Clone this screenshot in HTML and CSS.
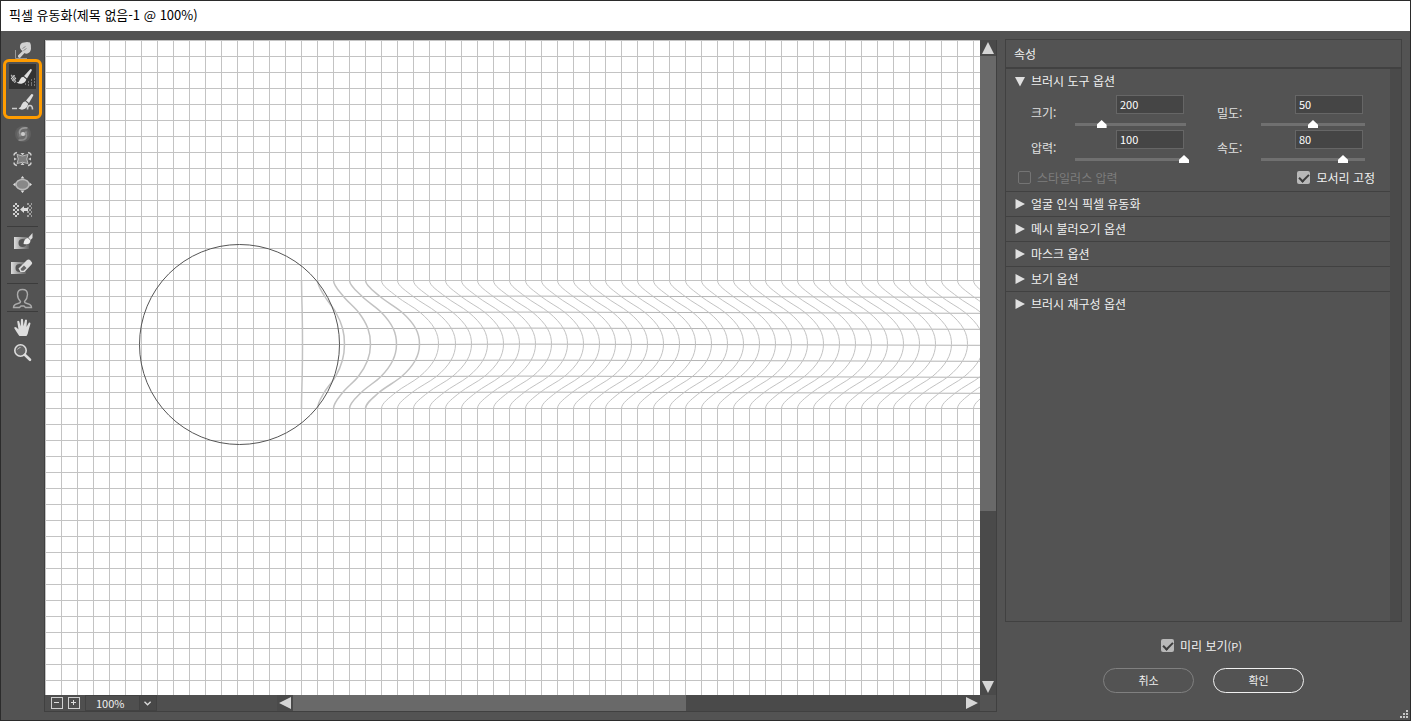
FILE: index.html
```html
<!DOCTYPE html>
<html lang="ko">
<head>
    <meta charset="UTF-8">
    <meta name="viewport" content="width=device-width, initial-scale=1.0">
    <title>픽셀 유동화</title>
    <link rel="stylesheet" href="styles.css">
</head>
<body>
    <div class="dialog">
        <header class="titlebar">픽셀 유동화(제목 없음-1 @ 100%)</header>
        <div class="main">
            <nav class="toolbar">
                <button class="tool" aria-label="뒤틀기">
                    <svg viewBox="0 0 27 25">
                        <path d="M6.500 11V19.500H18" fill="none" stroke="#999"/>
                        <path d="M11 7Q11.500 3.500 15 3.500Q18 2.500 21 3.500Q22.500 6 22 10Q21.500 13.500 18.500 14.500Q16.500 15 15.500 14L11 19Q8.500 18.500 9 16.500L13.500 12Q10.500 10 11 7Z" fill="#d0d0d0"/>
                        <path d="M13.500 9.500l3-2M14.500 11.500l3-2" stroke="#8a8a8a"/>
                    </svg>
                </button>
                <div class="brush-tools">
                    <button class="tool active" aria-label="재구성">
                        <svg viewBox="0 0 27 25">
                            <path d="M2 10l5 4v5l-5-4z" fill="#666"/>
                            <path d="M2 11l5 7M2 14l4 5M4 11l3 4M2 15l4-4M3 17l4-3" stroke="#ddd" stroke-width=".7"/>
                            <path d="M21.500 5Q23.500 5 22.500 7L18 14.500L15 12Z" fill="#ddd"/>
                            <path d="M14.300 12.700L17.300 15.300Q16.500 19 12.500 19.700Q10 20 7.500 18.500Q10.500 18 11 15.500Q12 13 14.300 12.700Z" fill="#e4e4e4"/>
                            <path d="M16 20h1M19 18h1M22 16h1M25 15h1M19 21h1M22 19h1M25 18h1M22 21h1M25 21h1" stroke="#bbb"/>
                        </svg>
                    </button>
                    <button class="tool" aria-label="매끄럽게">
                        <svg viewBox="0 0 27 25">
                            <path d="M22.500 4Q25 4 24 6L20 13L17 10.500Z" fill="#ddd"/>
                            <path d="M16.300 11.200L19.200 13.700Q18.500 18.500 14 19.500Q12 20 9.500 18.500Q12 17.500 12.700 14.500Q14 11.500 16.300 11.200Z" fill="#ddd"/>
                            <path d="M3 18.500H8M18.500 19.500Q18.500 15.500 21 15.500Q23.500 15.500 23.500 19.500" fill="none" stroke="#ccc" stroke-width="1.600"/>
                        </svg>
                    </button>
                </div>
                <button class="tool" aria-label="시계 방향 돌리기">
                    <svg viewBox="0 0 27 25">
                        <circle cx="14" cy="12" r="8" fill="#606060"/>
                        <circle cx="14" cy="12" r="6" fill="#6c6c6c"/>
                        <path d="M18.500 6Q11 5 10.500 10Q10.500 13 14 13Q17 13 17 9.500" fill="none" stroke="#999" stroke-width="1.600"/>
                        <path d="M9.500 18Q17 19 17.500 14Q17.500 11 14 11Q11 11 11 14.500" fill="none" stroke="#8c8c8c" stroke-width="1.600"/>
                        <circle cx="14" cy="12" r="2" fill="#ccc"/>
                    </svg>
                </button>
                <button class="tool" aria-label="오목">
                    <svg viewBox="0 0 27 25">
                        <path d="M8 7.500Q13.500 10.500 19 7.500Q16.500 12 19 16.500Q13.500 14 8 16.500Q10.500 12 8 7.500Z" fill="#808080" stroke="#bbb"/>
                        <path d="M5 8.500Q5 6 8 5.500M19 5.500Q22 6 22 8.500M5 15.500Q5 18 8 18.500M19 18.500Q22 18 22 15.500" fill="none" stroke="#ccc" stroke-width="1.500"/>
                        <path d="M13.500 8.500l-2-2.500h4zM13.500 15.500l-2 2.500h4zM8 12l-3-1.500v3zM19 12l3-1.500v3z" fill="#ccc"/>
                    </svg>
                </button>
                <button class="tool" aria-label="볼록">
                    <svg viewBox="0 0 27 25">
                        <ellipse cx="13.500" cy="12.500" rx="6.500" ry="5" fill="#888" stroke="#bbb" stroke-width="1.500"/>
                        <path d="M13.500 4l2 2.500h-4zM13.500 21l2-2.500h-4zM4 12.500l2.500-2v4zM23 12.500l-2.500-2v4z" fill="#ddd"/>
                    </svg>
                </button>
                <button class="tool" aria-label="왼쪽 밀기">
                    <svg viewBox="0 0 27 25">
                        <defs>
                            <pattern id="checker" width="4" height="4" patternUnits="userSpaceOnUse">
                                <path d="M0 0h2v2h-2zM2 2h2v2h-2z" fill="#d0d0d0"/>
                            </pattern>
                        </defs>
                        <path d="M4 6h6v14H4z" fill="url(#checker)"/>
                        <path d="M18 6h5v14h-5z" fill="url(#checker)" opacity=".6"/>
                        <path d="M11 12.500l4-3.500v2h4v3h-4v2z" fill="#ddd"/>
                    </svg>
                </button>
                <hr class="divider">
                <button class="tool" aria-label="마스크 고정">
                    <svg viewBox="0 0 27 25">
                        <defs>
                            <linearGradient id="fade">
                                <stop offset="0" stop-color="#ddd"/>
                                <stop offset="1" stop-color="#606060"/>
                            </linearGradient>
                        </defs>
                        <path d="M5 8h15v12H5z" fill="url(#fade)"/>
                        <circle cx="13.500" cy="14" r="4" fill="#555"/>
                        <path d="M14.500 15Q15 9.500 19 9L21.500 11.500Q21 16.500 14.500 15Z" fill="#eee"/>
                        <path d="M19.500 8.500L23.500 4V9L21.500 11Z" fill="#ddd"/>
                    </svg>
                </button>
                <button class="tool" aria-label="마스크 고정 해제">
                    <svg viewBox="0 0 27 25">
                        <path d="M2 8h15v12H2z" fill="url(#fade)"/>
                        <circle cx="10.500" cy="14" r="4" fill="#555"/>
                        <path d="M9.500 14.500L18 6Q20 5 21.500 6.500L23 8.500Q23.500 9.500 22.500 10.500L15.500 18H11.500Z" fill="#ddd"/>
                        <path d="M11.500 15l3.500-3.500 2.500 2.500-3 2.800h-2z" fill="#666"/>
                    </svg>
                </button>
                <hr class="divider">
                <button class="tool" aria-label="얼굴">
                    <svg viewBox="0 0 27 25">
                        <path d="M11.500 15.500Q8.500 12.500 8.500 8.500Q8.500 3.500 13.500 3.500Q18.500 3.500 18.500 8.500Q18.500 12.500 15.500 15.500Q15.500 17 18 17.500Q22.500 18.500 22.500 21.500H16.500L15 20H12L10.500 21.500H4.500Q4.500 18.500 9 17.500Q11.500 17 11.500 15.500Z" fill="none" stroke="#aaa" stroke-width="1.400"/>
                    </svg>
                </button>
                <hr class="divider tight">
                <button class="tool" aria-label="손">
                    <svg viewBox="0 0 27 25">
                        <path d="M10 20.500Q7.500 17 5.200 13Q5.500 11.300 7.500 12.500L9.500 14.500L8.200 6.500Q9 5 10.200 6.300L11.700 11.500L11.900 4.500Q13 3.200 14 4.500L14.500 11.200L16 5Q17.200 4 18 5.200L17.500 12L19.800 7.700Q21.200 7 21.500 8.500L19.500 15.500Q19 19 17.500 21H10.500Z" fill="#ddd"/>
                    </svg>
                </button>
                <button class="tool" aria-label="확대/축소">
                    <svg viewBox="0 0 27 25">
                        <circle cx="11.500" cy="10.500" r="5.700" fill="#666" stroke="#ddd" stroke-width="1.600"/>
                        <path d="M8.500 9.500Q9.500 7.500 11.500 7.500" fill="none" stroke="#bbb"/>
                        <path d="M15.800 14.800L21 19.800" stroke="#ddd" stroke-width="2.600" stroke-linecap="round"/>
                    </svg>
                </button>
            </nav>

            <section class="workspace">
                <div class="canvas">
                    <svg class="artwork" width="100%" height="100%">
                        <defs>
                            <pattern id="grid" width="16" height="16" patternUnits="userSpaceOnUse">
                                <path d="M0 .5H16M.5 0V16" stroke="#c3c3c3"/>
                            </pattern>
                        </defs>
                        <rect width="100%" height="100%" fill="url(#grid)"/>
                        <rect x="256" y="241" width="100%" height="127" fill="#fff"/>
                        <g id="rows" class="rows"></g>
                        <g id="waves" class="waves"></g>
                        <circle class="brush" cx="194.500" cy="304.500" r="100"/>
                    </svg>
                </div>
                <div class="vscroll">
                    <button class="arrow" aria-label="위로"><svg viewBox="0 0 16 16"><path d="M8 2l6 12H2z"/></svg></button>
                    <div class="track"><div class="thumb"></div></div>
                    <button class="arrow" aria-label="아래로"><svg viewBox="0 0 16 16"><path d="M8 14L2 2h12z"/></svg></button>
                </div>
                <div class="statusbar">
                    <div class="zoom-tools">
                        <button class="step" aria-label="축소"><svg viewBox="0 0 12 12"><path d="M3 5.500h5"/></svg></button>
                        <button class="step" aria-label="확대"><svg viewBox="0 0 12 12"><path d="M3 5.500h5M5.500 3v5"/></svg></button>
                        <div class="zoom-level">
                            <select aria-label="배율">
                                <option>50%</option>
                                <option selected>100%</option>
                                <option>200%</option>
                            </select>
                            <svg viewBox="0 0 18 16"><path d="M5 6.500L8.500 10L12 6.500"/></svg>
                        </div>
                    </div>
                    <div class="hscroll">
                        <button class="arrow" aria-label="왼쪽으로"><svg viewBox="0 0 16 16"><path d="M2 8l12-6v12z"/></svg></button>
                        <div class="track"><div class="thumb"></div></div>
                        <button class="arrow" aria-label="오른쪽으로"><svg viewBox="0 0 16 16"><path d="M14 8L2 2v12z"/></svg></button>
                    </div>
                </div>
                <div class="corner"></div>
            </section>

            <aside class="side">
                <div class="panel">
                    <h1 class="panel-title">속성</h1>
                    <div class="panel-body">
                        <div class="sections">
                            <button class="section open">브러시 도구 옵션</button>
                            <div class="options">
                                <div class="option">
                                    <label for="size">크기:</label>
                                    <div class="control">
                                        <input type="text" id="size" value="200">
                                        <input type="range" aria-label="크기" value="23">
                                    </div>
                                </div>
                                <div class="option">
                                    <label for="density">밀도:</label>
                                    <div class="control">
                                        <input type="text" id="density" value="50">
                                        <input type="range" aria-label="밀도" value="50">
                                    </div>
                                </div>
                                <div class="option">
                                    <label for="pressure">압력:</label>
                                    <div class="control">
                                        <input type="text" id="pressure" value="100">
                                        <input type="range" aria-label="압력" value="100">
                                    </div>
                                </div>
                                <div class="option">
                                    <label for="rate">속도:</label>
                                    <div class="control">
                                        <input type="text" id="rate" value="80">
                                        <input type="range" aria-label="속도" value="80">
                                    </div>
                                </div>
                            </div>
                            <div class="checks">
                                <label class="check disabled"><input type="checkbox" disabled>스타일러스 압력</label>
                                <label class="check"><input type="checkbox" checked>모서리 고정</label>
                            </div>
                            <button class="section">얼굴 인식 픽셀 유동화</button>
                            <button class="section">메시 불러오기 옵션</button>
                            <button class="section">마스크 옵션</button>
                            <button class="section">보기 옵션</button>
                            <button class="section">브러시 재구성 옵션</button>
                        </div>
                        <div class="panel-scroll"></div>
                    </div>
                </div>
                <footer class="footer">
                    <label class="check"><input type="checkbox" checked><span>미리 보기<small>(P)</small></span></label>
                    <div class="buttons">
                        <button class="btn">취소</button>
                        <button class="btn primary">확인</button>
                    </div>
                </footer>
            </aside>
        </div>
        <svg class="grip" viewBox="0 0 9 9"><path d="M6 0h2v2H6zM3 3h2v2H3zM6 3h2v2H6zM0 6h2v2H0zM3 6h2v2H3zM6 6h2v2H6z"/></svg>
    </div>
    <script src="script.js"></script>
</body>
</html>
```
FILE: styles.css
```css
* {
    box-sizing: border-box;
}
body {
    margin: 0;
    background: #535353;
    color: #f0f0f0;
    font-family: "Noto Sans CJK KR", sans-serif;
    font-size: 12px;
}
button, input, select {
    margin: 0;
    padding: 0;
    border: 0;
    background: none;
    color: inherit;
    font-family: inherit;
    font-size: inherit;
}
svg {
    display: block;
}
.dialog {
    position: relative;
    display: flex;
    flex-direction: column;
    height: 100vh;
    min-height: 480px;
    border: 1px solid #2b2b2b;
}
.titlebar {
    height: 30px;
    padding-left: 8px;
    background: #fff;
    color: #000;
    font-size: 13px;
    line-height: 28px;
}
.main {
    display: flex;
    flex: 1;
    min-height: 0;
}

/* toolbar */
.toolbar {
    display: flex;
    flex-direction: column;
    align-items: center;
    width: 43px;
    padding-top: 8px;
}
.tool {
    width: 27px;
    height: 25px;
}
.tool svg {
    width: 27px;
    height: 25px;
}
.tool.active {
    background: #333;
}
.brush-tools {
    position: relative;
    display: flex;
    flex-direction: column;
    gap: 1px;
    margin-bottom: 7px;
}
.brush-tools::after {
    content: "";
    position: absolute;
    inset: -5px -6px -4px;
    border: 3px solid #ff9c00;
    border-radius: 6px;
    pointer-events: none;
}
.divider {
    width: 31px;
    height: 1px;
    margin: 4px 0 2px;
    border: 0;
    background: #3c3c3c;
}
.divider.tight {
    margin: 0 0 3px;
}

/* canvas and scrollbars */
.workspace {
    display: grid;
    grid-template-columns: minmax(0, 1fr) 16px;
    grid-template-rows: minmax(0, 1fr) 16px;
    flex: 1;
    margin: 9px 0 8px;
    border: 1px solid #404040;
    border-top: 0;
}
.canvas {
    background: #fff;
    overflow: hidden;
}
.rows, .waves {
    fill: none;
    stroke: #b4b4b4;
}
.waves {
    stroke: #c2c2c2;
}
.waves .bold {
    stroke-width: 1.5;
}
.brush {
    fill: none;
    stroke: #555;
}
.vscroll, .hscroll {
    display: flex;
}
.vscroll {
    flex-direction: column;
}
.hscroll {
    flex: 1;
}
.track {
    flex: 1;
    background: #4a4a4a;
}
.thumb {
    background: #696969;
}
.vscroll .thumb {
    height: 73%;
}
.hscroll .thumb {
    width: 58.6%;
    height: 100%;
}
.arrow {
    width: 16px;
    height: 16px;
    background: #4a4a4a;
}
.arrow svg {
    fill: #d6d6d6;
}
.statusbar {
    display: flex;
    background: #4f4f4f;
}
.zoom-tools {
    display: flex;
    align-items: center;
    width: 232px;
    padding-left: 6px;
    gap: 5px;
}
.step {
    width: 12px;
    height: 12px;
    border: 1px solid #d0d0d0;
}
.step svg {
    width: 12px;
    height: 12px;
    stroke: #ddd;
    margin: -1px;
}
.zoom-level {
    position: relative;
    width: 72px;
    height: 16px;
    border: 1px solid #424242;
}
.zoom-level select {
    display: block;
    width: 100%;
    height: 14px;
    padding-left: 10px;
    appearance: none;
    font-size: 11px;
    line-height: 14px;
}
.zoom-level svg {
    position: absolute;
    top: -1px;
    right: -1px;
    width: 18px;
    height: 16px;
    border: 1px solid #424242;
    background: #484848;
    fill: none;
    stroke: #ddd;
    stroke-width: 1.5;
    pointer-events: none;
}

/* properties panel */
.side {
    display: flex;
    flex-direction: column;
    width: 397px;
    margin: 8px 8px 0;
}
.panel {
    display: flex;
    flex-direction: column;
    flex: 1;
    border: 1px solid #414141;
}
.panel-title {
    height: 29px;
    margin: 0;
    padding-left: 8px;
    border-bottom: 2px solid #414141;
    font-size: 12px;
    font-weight: normal;
    line-height: 27px;
}
.panel-body {
    display: flex;
    flex: 1;
}
.sections {
    flex: 1;
}
.panel-scroll {
    width: 11px;
    background: #4a4a4a;
}
.section {
    display: flex;
    align-items: center;
    gap: 6px;
    width: 100%;
    height: 25px;
    padding: 0 0 2px 9px;
    border-top: 1px solid #414141;
}
.section::before {
    content: "";
    width: 10px;
    height: 10px;
    margin-top: 2px;
    background: #e0e0e0;
    clip-path: polygon(5% 0, 100% 50%, 5% 100%);
}
.section.open {
    border-top: 0;
}
.section.open::before {
    clip-path: polygon(0 5%, 100% 5%, 50% 100%);
}
.options {
    display: grid;
    grid-template-columns: 158px 151px;
    column-gap: 28px;
    padding: 1px 0 0 25px;
}
.option {
    display: grid;
    grid-template-columns: 41px 1fr;
    align-items: center;
    height: 35px;
    color: #e0e0e0;
}
.control {
    display: flex;
    flex-direction: column;
    gap: 6px;
    height: 35px;
}
.option input[type="text"] {
    align-self: flex-end;
    width: 68px;
    height: 19px;
    margin-right: 5px;
    padding: 0 0 1px 3px;
    border: 1px solid #666;
    background: #454545;
    color: #fff;
    font-size: 11px;
}
.option input[type="range"] {
    width: 100%;
    height: 8px;
    appearance: none;
    background: linear-gradient(#707070, #707070) center / calc(100% - 6px) 3px no-repeat;
}
.option input[type="range"]::-webkit-slider-thumb {
    appearance: none;
    width: 10px;
    height: 8px;
    background: #fff;
    clip-path: polygon(50% 0, 100% 60%, 100% 100%, 0 100%, 0 60%);
}
.checks {
    display: flex;
    justify-content: space-between;
    height: 26px;
    padding: 0 15px 2px 12px;
}
.check {
    display: flex;
    align-items: center;
    gap: 6px;
}
.check.disabled {
    color: #7d7d7d;
}
.check input {
    width: 13px;
    height: 13px;
    appearance: none;
    border: 1px solid #747474;
    border-radius: 2px;
}
.check input:checked {
    border: 0;
    background: #b8b8b8;
}
.check input:checked::before {
    content: "";
    display: block;
    width: 4px;
    height: 8px;
    margin: 1px 0 0 4px;
    border: solid #3c3c3c;
    border-width: 0 2px 2px 0;
    transform: rotate(45deg);
}
.check small {
    font-size: 11px;
}

/* footer */
.footer {
    display: flex;
    flex-direction: column;
    align-items: center;
    gap: 16px;
    padding: 16px 0 27px;
}
.footer .check {
    height: 14px;
    margin-right: 4px;
}
.buttons {
    display: flex;
    gap: 19px;
}
.btn {
    width: 91px;
    height: 25px;
    padding-bottom: 2px;
    border: 1px solid #808080;
    border-radius: 13px;
    font-size: 11px;
}
.btn.primary {
    border-color: #f0f0f0;
}
.grip {
    position: absolute;
    right: 1px;
    bottom: 1px;
    width: 9px;
    height: 9px;
    fill: #c8c8c8;
}
```
FILE: script.js
```js
// Mesh lines pushed to the right by the brush stroke
const NS = 'http://www.w3.org/2000/svg';
const TOP = 240;
const STEP = 16;
const MAX_SHIFT = 58;
// how far each mesh row is pushed, from the top of the stroke to the bottom
const profile = [0, 0.27, 0.68, 0.93, 1, 0.92, 0.67, 0.25, 0];
// the first lines under the brush are pushed less
const firstShifts = [1, 27, 37, 47, 54, 57];

function addPath(parent, d, className) {
    const path = document.createElementNS(NS, 'path');
    path.setAttribute('d', d);
    if (className) path.setAttribute('class', className);
    parent.appendChild(path);
}

function wavePath(x, shift) {
    const pts = profile.map((p, i) => [x + 0.5 + shift * p, TOP + 0.5 + i * STEP]);
    let d = `M${pts[0][0]} ${pts[0][1]}`;
    for (let i = 0; i < pts.length - 1; i++) {
        const a = pts[i - 1] || pts[i];
        const b = pts[i];
        const c = pts[i + 1];
        const e = pts[i + 2] || c;
        const out = i === 0 ? 0.05 : (c[0] - a[0]) / 6;
        const back = i === pts.length - 2 ? 0 : (e[0] - b[0]) / 6;
        d += `C${b[0] + out} ${b[1] + STEP / 3} ${c[0] - back} ${c[1] - STEP / 3} ${c[0]} ${c[1]}`;
    }
    return d;
}

const waves = document.getElementById('waves');
for (let i = 0; i < 150; i++) {
    const shift = i < firstShifts.length ? firstShifts[i] : MAX_SHIFT;
    addPath(waves, wavePath(256 + i * STEP, shift), i < 5 ? 'bold' : '');
}

const rows = document.getElementById('rows');
for (let i = 1; i < 8; i++) {
    const y = TOP + i * STEP + 0.5;
    addPath(rows, `M256 ${y}H360L480 ${y - 0.4}L935 ${y + 0.8}H2600`);
}
```
